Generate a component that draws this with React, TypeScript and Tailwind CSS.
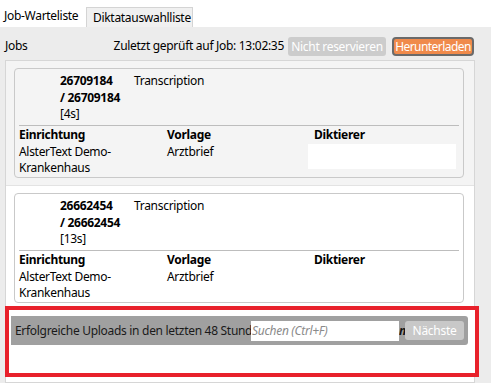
import React from "react";

function Card({ num, dur }: { num: string; dur: string }) {
  return (
    <div className="w-[450px] h-[110px] border border-[#c9c9c9] rounded-[4px] flex flex-col">
      <div className="flex h-[56px] pt-[4px] leading-[16.5px]">
        <div className="w-[119px] pl-[45px] shrink-0">
          <div className="font-bold">{num}</div>
          <div className="font-bold">/ {num}</div>
          <div>{dur}</div>
        </div>
        <div>Transcription</div>
      </div>
      <div className="mx-[4px] border-t border-[#bdbdbd]" />
      <div className="flex pl-[4px] pt-[1px] leading-[16.5px]">
        <div className="w-[148px] shrink-0">
          <div className="font-bold">Einrichtung</div>
          <div>AlsterText Demo-</div>
          <div>Krankenhaus</div>
        </div>
        <div className="w-[141px] shrink-0">
          <div className="font-bold">Vorlage</div>
          <div>Arztbrief</div>
        </div>
        <div className="w-[148px] shrink-0">
          <div className="font-bold pl-[6px]">Diktierer</div>
          <div className="h-[25px] bg-white" />
        </div>
      </div>
    </div>
  );
}

export default function App() {
  return (
    <div
      className="relative w-[491px] h-[383px] overflow-hidden bg-white text-[12px] tracking-[-0.3px] text-black"
      style={{ fontFamily: '"Noto Sans", "Open Sans", sans-serif' }}
    >
      {/* Tabs */}
      <div className="h-[27px] flex items-end bg-white">
        <div className="h-[22px] w-[86px] flex items-center pl-[4px] bg-white">Job-Warteliste</div>
        <div className="h-[20px] w-[107px] flex items-center pl-[6px] bg-[#f0f0f0] border border-b-0 border-[#d4d4d4]">
          Diktatauswahlliste
        </div>
      </div>
      {/* Panel */}
      <div className="h-[356px] bg-[#ececec] flex flex-col">
        <div className="h-[33px] flex items-end pb-[4px] pl-[5px] pr-[17px]">
          <div className="pb-[1px]">Jobs</div>
          <div className="ml-auto pb-[1px] mr-[4px]">Zuletzt geprüft auf Job: 13:02:35</div>
          <div className="h-[19px] w-[98px] justify-center rounded-[3px] bg-[#cccccc] text-white flex items-center">Nicht reservieren</div>
          <div className="ml-[6px] h-[19px] w-[82px] justify-center rounded-[4px] bg-[#f08a4b] border-2 border-[#6a6a6a] text-white flex items-center tracking-[-0.55px] whitespace-nowrap">
            Herunterladen
          </div>
        </div>
        <div className="flex flex-1 min-h-0">
          <div className="ml-[5px] w-[470px] border border-[#d6d6d6] bg-white flex flex-col">
            <div className="bg-[#f4f4f4] pl-[8px] pt-[7px] pb-[7px] border-b border-[#e3e3e3]">
              <Card num="26709184" dur="[4s]" />
            </div>
            <div className="bg-white pl-[8px] pt-[7px] pb-[7px]">
              <Card num="26662454" dur="[13s]" />
            </div>
          </div>
        </div>
      </div>
      {/* Annotated upload panel */}
      <div className="absolute left-[5px] top-[306px] w-[474px] h-[71px] border-4 border-[#e8212b] bg-white">
        <div className="mt-[6px] ml-[2px] w-[457px] h-[29px] bg-[#a0a0a0] rounded-r-[3px] flex items-center">
          <div className="w-[240px] pl-[4px] shrink-0 overflow-hidden whitespace-nowrap text-[#1a1a1a]">
            Erfolgreiche Uploads in den letzten 48 Stunden
          </div>
          <div className="w-[148px] h-[20px] bg-white shrink-0 flex items-center pl-[1px] italic text-[#8a8a8a]">
            Suchen (Ctrl+F)
          </div>
          <div className="w-[6px] shrink-0 overflow-hidden font-bold italic text-[#111] leading-none">n</div>
          <div className="h-[19px] w-[59px] rounded-[3px] bg-[#c8c8c8] text-white flex items-center justify-center">
            Nächste
          </div>
        </div>
      </div>
    </div>
  );
}
